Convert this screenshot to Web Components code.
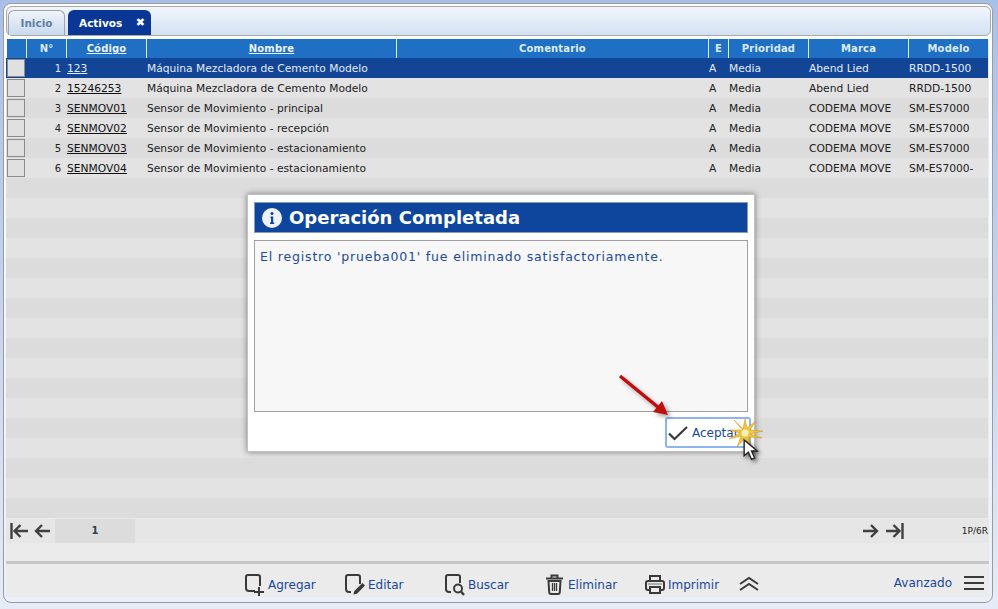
<!DOCTYPE html>
<html lang="es">
<head>
<meta charset="utf-8">
<title>Activos</title>
<style>
    html, body { margin: 0; height: 100%; overflow: hidden; }
    body { background: linear-gradient(#a8c0e8, #c6d3ec 50%, #e6ecf7); font-family: "DejaVu Sans", Verdana, sans-serif; }
</style>
</head>
<body>
<app-frame>
    <tab-bar slot="tabs"></tab-bar>
    <data-grid slot="grid"></data-grid>
    <grid-pager slot="pager"></grid-pager>
    <action-bar slot="actions"></action-bar>
    <message-dialog slot="dialog" heading="Operación Completada">El registro 'prueba001' fue eliminado satisfactoriamente.</message-dialog>
</app-frame>

<script>
const ICONS = {
    add: '<path d="M10 17H4a3 3 0 0 1-3-3V3a2 2 0 0 1 2-2h10a2 2 0 0 1 2 2v9" fill="none" stroke="#3a3a3a" stroke-width="2"/><path d="M14 13v9M9 18h10" fill="none" stroke="#3a3a3a" stroke-width="2"/>',
    edit: '<path d="M6 18H4a3 3 0 0 1-3-3V3a2 2 0 0 1 2-2h10a2 2 0 0 1 2 2v7" fill="none" stroke="#3a3a3a" stroke-width="2"/><path d="M8.500 20.500l.8-3.500 8.200-8 2.500 2.500-8 8.200z" fill="#3a3a3a"/>',
    search: '<path d="M6 18H4a3 3 0 0 1-3-3V3a2 2 0 0 1 2-2h10a2 2 0 0 1 2 2v6" fill="none" stroke="#3a3a3a" stroke-width="2"/><circle cx="13" cy="14.500" r="4" fill="none" stroke="#3a3a3a" stroke-width="2"/><path d="M16 17.500l3 3.500" stroke="#3a3a3a" stroke-width="2.400"/>',
    trash: '<path d="M1 4.500h17M6.500 4V1.500h6V4" fill="none" stroke="#3a3a3a" stroke-width="2"/><path d="M3.500 7l.7 11a2 2 0 0 0 2 2h6.600a2 2 0 0 0 2-2l.7-11z" fill="none" stroke="#3a3a3a" stroke-width="2"/><path d="M7.500 9v8M9.500 9v8M11.500 9v8" stroke="#3a3a3a" stroke-width="1.300"/>',
    print: '<path d="M5 7V2h10v5" fill="none" stroke="#3a3a3a" stroke-width="2"/><path d="M4 16H3a2 2 0 0 1-2-2V9a2 2 0 0 1 2-2h14a2 2 0 0 1 2 2v5a2 2 0 0 1-2 2h-1" fill="none" stroke="#3a3a3a" stroke-width="2"/><path d="M5 13h10v6H5z" fill="none" stroke="#3a3a3a" stroke-width="2"/><path d="M3 10h14" stroke="#999" stroke-width="1.500"/>'
};

class AppFrame extends HTMLElement {
    constructor() {
        super();
        this.attachShadow({ mode: 'open' });
        this.shadowRoot.innerHTML = `
            <style>
                :host { display: block; height: 100%; padding: 3px 5px 6px 3px; box-sizing: border-box; position: relative; }
                #frame {
                    height: 100%;
                    box-sizing: border-box;
                    border: 1px solid #9c9c9c;
                    border-radius: 8px;
                    background: linear-gradient(#fdfeff, #e9f0f9);
                    padding: 2px 3px 5px 2px;
                    display: flex;
                    flex-direction: column;
                }
                #body { flex: 1; display: flex; flex-direction: column; min-height: 0; background: #ebebeb; }
            </style>
            <div id="frame">
                <slot name="tabs"></slot>
                <div id="body">
                    <slot name="grid"></slot>
                    <slot name="pager"></slot>
                </div>
                <slot name="actions"></slot>
            </div>
            <slot name="dialog"></slot>
        `;
    }
}

class TabBar extends HTMLElement {
    constructor() {
        super();
        this.attachShadow({ mode: 'open' });
        this.shadowRoot.innerHTML = `
            <style>
                :host {
                    display: flex;
                    align-items: flex-end;
                    gap: 3px;
                    height: 30px;
                    box-sizing: border-box;
                    padding: 0 0 0 1px;
                    background: linear-gradient(#f1f6fc, #d3e1f2);
                    border: 1px solid #a8a8a8;
                    border-radius: 6px;
                    flex: none;
                    margin: 0 -2px 3px 0;
                }
                .tab {
                    height: 25px;
                    box-sizing: border-box;
                    border-radius: 6px 6px 0 0;
                    font-size: 10.500px;
                    font-weight: bold;
                    display: flex;
                    align-items: center;
                }
                #home {
                    width: 57px;
                    justify-content: center;
                    color: #5f7ea6;
                    border: 1px solid #a3a3a3;
                    border-bottom: 0;
                    background: linear-gradient(#f0f4fa, #c9d9ee);
                }
                #active {
                    width: 83px;
                    padding: 0 6px 0 11px;
                    justify-content: space-between;
                    color: #fff;
                    background: #0a3796;
                }
                #close { font-size: 11px; }
            </style>
            <div class="tab" id="home">Inicio</div>
            <div class="tab" id="active"><span>Activos</span><span id="close">✖</span></div>
        `;
    }
}

class DataGrid extends HTMLElement {
    constructor() {
        super();
        this.attachShadow({ mode: 'open' });
        this.rows = [
            ['1', '123', 'Máquina Mezcladora de Cemento Modelo', 'A', 'Media', 'Abend Lied', 'RRDD-1500'],
            ['2', '15246253', 'Máquina Mezcladora de Cemento Modelo', 'A', 'Media', 'Abend Lied', 'RRDD-1500'],
            ['3', 'SENMOV01', 'Sensor de Movimiento - principal', 'A', 'Media', 'CODEMA MOVE', 'SM-ES7000'],
            ['4', 'SENMOV02', 'Sensor de Movimiento - recepción', 'A', 'Media', 'CODEMA MOVE', 'SM-ES7000'],
            ['5', 'SENMOV03', 'Sensor de Movimiento - estacionamiento', 'A', 'Media', 'CODEMA MOVE', 'SM-ES7000'],
            ['6', 'SENMOV04', 'Sensor de Movimiento - estacionamiento', 'A', 'Media', 'CODEMA MOVE', 'SM-ES7000-']
        ];
        this.render();
    }

    render() {
        const cells = this.rows.map((r, i) => `
            <tr class="${i === 0 ? 'sel' : ''}">
                <td class="pick"><div class="box"></div></td>
                <td class="num">${r[0]}</td>
                <td><a>${r[1]}</a></td>
                <td>${r[2]}</td>
                <td></td>
                <td>${r[3]}</td>
                <td>${r[4]}</td>
                <td>${r[5]}</td>
                <td>${r[6]}</td>
            </tr>
        `).join('');
        const blanks = Array.from({ length: 17 }, () => '<tr>' + '<td></td>'.repeat(9) + '</tr>').join('');
        this.shadowRoot.innerHTML = `
            <style>
                :host { display: block; height: 479px; flex: none; overflow: hidden; }
                table { border-collapse: separate; border-spacing: 0; table-layout: fixed; width: 982px; font-size: 10.700px; }
                th {
                    height: 19px;
                    padding: 0;
                    background: #1f6fc4;
                    color: #dcebfa;
                    font-size: 10px;
                    font-weight: bold;
                    letter-spacing: .15px;
                    border-left: 1px solid #dfe9f5;
                    text-align: center;
                    box-sizing: border-box;
                }
                th:first-child { border-left: 1px solid #fff; }
                th u { color: #e8f2fc; }
                td {
                    height: 20px;
                    padding: 0 0 0 1px;
                    color: #222;
                    white-space: nowrap;
                    overflow: hidden;
                    box-sizing: border-box;
                }
                tr:nth-child(even) td { background: #e3e3e3; }
                tr:nth-child(odd) td { background: #dcdcdc; }
                tr.sel td { background: #124596; color: #e2ebf7; }
                a { color: #111; text-decoration: underline; }
                tr.sel a { color: #e2ebf7; }
                td.num { text-align: right; padding: 0 5px 0 0; font-size: 10px; }
                td.pick { padding: 0; }
                .box { box-sizing: border-box; width: 18px; height: 18px; border: 1px solid #8a8a8a; background: #e0e0e0; margin-left: 1px; }
            </style>
            <table>
                <colgroup>
                    <col style="width:20px"><col style="width:40px"><col style="width:80px"><col style="width:250px">
                    <col style="width:312px"><col style="width:20px"><col style="width:80px"><col style="width:100px"><col style="width:80px">
                </colgroup>
                <thead>
                    <tr>
                        <th></th><th>N°</th><th><u>Código</u></th><th><u>Nombre</u></th><th>Comentario</th>
                        <th>E</th><th>Prioridad</th><th>Marca</th><th>Modelo</th>
                    </tr>
                </thead>
                <tbody>${cells}${blanks}</tbody>
            </table>
        `;
    }
}

class GridPager extends HTMLElement {
    constructor() {
        super();
        this.attachShadow({ mode: 'open' });
        this.shadowRoot.innerHTML = `
            <style>
                :host {
                    display: flex;
                    align-items: center;
                    height: 24px;
                    flex: none;
                    background: #e6e6e6;
                    margin-top: 1px;
                    font-size: 10px;
                    color: #222;
                }
                svg { display: block; flex: none; }
                #page {
                    width: 80px;
                    height: 24px;
                    line-height: 24px;
                    text-align: center;
                    background: #dcdcdc;
                    font-weight: bold;
                    color: #2c3e55;
                    margin-left: 5px;
                }
                #first { margin-left: 4px; }
                #prev { margin-left: 6px; }
                #spacer { flex: 1; }
                #last { margin-left: 7px; }
                #count { width: 28px; text-align: right; margin-left: 56px; font-size: 9px; padding-right: 1px; }
            </style>
            <svg id="first" width="18" height="18" viewBox="0 0 18 18" fill="none" stroke="#404040" stroke-width="2.400"><path d="M1.500 1v16M18 9H5M10.500 3 4.500 9l6 6"/></svg>
            <svg id="prev" width="16" height="18" viewBox="0 0 16 18" fill="none" stroke="#404040" stroke-width="2.400"><path d="M16 9H2M8 3 2 9l6 6"/></svg>
            <div id="page">1</div>
            <div id="spacer"></div>
            <svg width="16" height="18" viewBox="0 0 16 18" fill="none" stroke="#404040" stroke-width="2.400"><path d="M0 9h14M8 3l6 6-6 6"/></svg>
            <svg id="last" width="18" height="18" viewBox="0 0 18 18" fill="none" stroke="#404040" stroke-width="2.400"><path d="M16.500 1v16M0 9h13M7.500 3l6 6-6 6"/></svg>
            <div id="count">1P/6R</div>
        `;
    }
}

class ActionButton extends HTMLElement {
    constructor() {
        super();
        this.attachShadow({ mode: 'open' });
    }

    connectedCallback() {
        this.shadowRoot.innerHTML = `
            <style>
                :host { display: flex; align-items: center; gap: 3px; color: #17479a; font-size: 12px; }
                svg { display: block; flex: none; }
            </style>
            <svg width="20" height="22" viewBox="0 0 20 22">${ICONS[this.getAttribute('icon')]}</svg>
            <slot></slot>
        `;
    }
}

class ActionBar extends HTMLElement {
    constructor() {
        super();
        this.attachShadow({ mode: 'open' });
        this.shadowRoot.innerHTML = `
            <style>
                :host {
                    display: flex;
                    align-items: center;
                    flex: none;
                    height: 36px;
                    box-sizing: border-box;
                    border-top: 3px solid #c6c6c6;
                    padding: 9px 0 0 239px;
                    background: #ebebeb;
                    font-size: 12px;
                }
                action-button { width: 100px; flex: none; }
                action-button:nth-of-type(5) { width: 94px; }
                #more { margin-bottom: 4px; }
                #adv { margin: 0 0 5px auto; color: #17479a; }
                #menu { margin: 0 5px 5px 12px; }
                svg { display: block; flex: none; }
            </style>
            <action-button icon="add">Agregar</action-button>
            <action-button icon="edit">Editar</action-button>
            <action-button icon="search">Buscar</action-button>
            <action-button icon="trash">Eliminar</action-button>
            <action-button icon="print">Imprimir</action-button>
            <svg id="more" width="20" height="15" viewBox="0 0 20 15" fill="none" stroke="#3a3a3a" stroke-width="2"><path d="M1 8l9-6 9 6M1 14l9-6 9 6"/></svg>
            <span id="adv">Avanzado</span>
            <svg id="menu" width="20" height="14" viewBox="0 0 20 14" stroke="#3a3a3a" stroke-width="2"><path d="M0 1h20M0 7h20M0 13h20"/></svg>
        `;
    }
}

class MessageDialog extends HTMLElement {
    constructor() {
        super();
        this.attachShadow({ mode: 'open' });
    }

    connectedCallback() {
        this.shadowRoot.innerHTML = `
            <style>
                :host {
                    position: absolute;
                    left: 247px;
                    top: 194px;
                    width: 508px;
                    height: 258px;
                    box-sizing: border-box;
                    background: #fff;
                    padding: 7px 6px 0 6px;
                    border: 1px solid #c0c0c0;
                    box-shadow: 0 0 6px rgba(0,0,0,.45);
                    display: flex;
                    flex-direction: column;
                }
                #head {
                    height: 31px;
                    flex: none;
                    box-sizing: border-box;
                    background: #0d469c;
                    border: 1px solid #8a9bb5;
                    color: #fff;
                    font-size: 18px;
                    font-weight: bold;
                    display: flex;
                    align-items: center;
                    gap: 6px;
                    padding-left: 6px;
                }
                #head svg { display: block; }
                #msg {
                    height: 172px;
                    flex: none;
                    box-sizing: border-box;
                    margin-top: 7px;
                    border: 1px solid #a0a0a0;
                    background: #f7f7f7;
                    color: #2049a0;
                    font-size: 12.500px;
                    letter-spacing: .82px;
                    padding: 8px 5px;
                }
                #foot { display: flex; justify-content: flex-end; margin: 5px -3px 0 0; }
                #ok {
                    width: 86px;
                    height: 31px;
                    box-sizing: border-box;
                    border: 2px solid #8db4ef;
                    border-radius: 3px;
                    background: #fff;
                    color: #17479a;
                    font-size: 12px;
                    display: flex;
                    align-items: center;
                    gap: 4px;
                    padding-left: 1px;
                    overflow: hidden;
                }
                #ok svg { display: block; flex: none; }
                .over { position: absolute; pointer-events: none; overflow: visible; }
                #arrow { left: 364px; top: 172px; filter: drop-shadow(3px 3px 2px rgba(0,0,0,.35)); }
                #spark { left: 478px; top: 224px; }
                #cursor { left: 495px; top: 244px; filter: drop-shadow(2px 2px 2px rgba(0,0,0,.6)); }
            </style>
            <div id="head">
                <svg width="22" height="22" viewBox="0 0 22 22"><circle cx="11" cy="11" r="10" fill="#eef2f8"/><circle cx="11" cy="6.500" r="1.500" fill="#0d469c"/><path d="M9.500 9.500h2.700v6h1v1.500H9v-1.500h1v-4.500h-.5z" fill="#0d469c"/></svg>
                <span>${this.getAttribute('heading')}</span>
            </div>
            <div id="msg"><slot></slot></div>
            <div id="foot">
                <div id="ok">
                    <svg width="20" height="16" viewBox="0 0 20 16" fill="none" stroke="#3a3a3a" stroke-width="2.200"><path d="M1 8.500 6.500 14 19 2"/></svg>
                    <span>Aceptar</span>
                </div>
            </div>
            <svg class="over" id="arrow" width="60" height="54" viewBox="0 0 60 54"><path d="M8 9 47 41" stroke="#c00d0d" stroke-width="3.500"/><path d="M56 48 41 45 50 34z" fill="#c00d0d"/></svg>
            <svg class="over" id="spark" width="38" height="30" viewBox="0 0 38 30"><path d="M19 14 8 1 17 10 19 0 21 9 30 2 24 11 37 12 24 15 36 19 23 18 25 29 19 19 11 28 15 17 3 20 14 14 4 11 15 11z" fill="#f1c63a" stroke="#c99312" stroke-width=".5"/><circle cx="19" cy="14" r="3.500" fill="#f8f0c0"/></svg>
            <svg class="over" id="cursor" width="17" height="22" viewBox="0 0 16 21"><path d="M1 1v15l4-3.500 3 7 3-1.300-3-6.700h5.500z" fill="#fff" stroke="#222" stroke-width="1.300"/></svg>
        `;
    }
}

customElements.define('app-frame', AppFrame);
customElements.define('tab-bar', TabBar);
customElements.define('data-grid', DataGrid);
customElements.define('grid-pager', GridPager);
customElements.define('action-button', ActionButton);
customElements.define('action-bar', ActionBar);
customElements.define('message-dialog', MessageDialog);
</script>
</body>
</html>
